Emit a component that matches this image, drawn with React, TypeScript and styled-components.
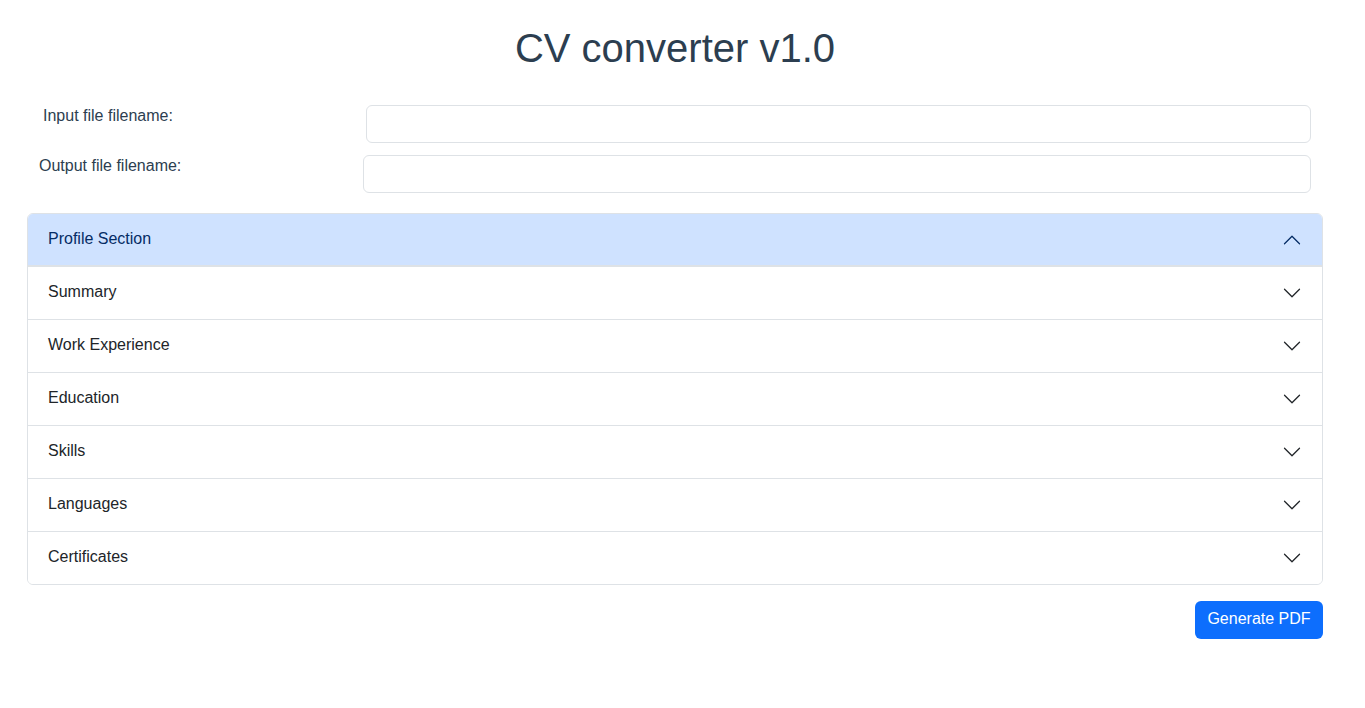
import React, { useState } from "react";
import styled, { createGlobalStyle } from "styled-components";

const Global = createGlobalStyle`
  html, body { margin: 0; padding: 0; background: #fff; }
  body { font-family: "Liberation Sans", Arial, sans-serif; color: #212529; }
  * { box-sizing: border-box; }
`;

const Page = styled.div`
  width: 1296px;
  margin-left: 27px;
  padding-top: 24px;
`;

const Title = styled.h1`
  margin: 0 0 33px;
  text-align: center;
  font-size: 40px;
  font-weight: 400;
  line-height: 48px;
  color: #2c3e50;
`;

const Form = styled.div`
  display: flex;
  flex-direction: column;
  gap: 12px;
  padding-right: 12px;
`;

const Row = styled.div`
  display: flex;
  align-items: flex-start;
`;

const Label = styled.label<{ $inset: number }>`
  width: 164px;
  flex: none;
  padding-left: ${(p) => p.$inset}px;
  font-size: 16px;
  line-height: 20px;
  margin-top: 1px;
  color: #2c3e50;
`;

const Input = styled.input<{ $offset: number }>`
  flex: 1;
  height: 38px;
  margin-left: ${(p) => p.$offset}px;
  border: 1px solid #dee2e6;
  border-radius: 6px;
  padding: 6px 12px;
  font: inherit;
  font-size: 16px;
  outline: none;
`;

const Accordion = styled.div`
  margin-top: 20px;
  border: 1px solid #dee2e6;
  border-radius: 6px;
  overflow: hidden;
`;

const Item = styled.div`
  & + & {
    border-top: 1px solid #dee2e6;
  }
`;

const Header = styled.button<{ $open: boolean }>`
  display: flex;
  align-items: center;
  justify-content: space-between;
  width: 100%;
  height: 52px;
  padding: 0 20px 2px;
  border: 0;
  background: ${(p) => (p.$open ? "#cfe2ff" : "#fff")};
  color: ${(p) => (p.$open ? "#052c65" : "#212529")};
  font-family: "Liberation Sans", Arial, sans-serif;
  font-size: 16px;
  text-align: left;
  cursor: pointer;
  box-shadow: ${(p) => (p.$open ? "inset 0 -1px 0 #dee2e6" : "none")};
`;

const Chevron = styled.svg<{ $open: boolean }>`
  width: 20px;
  height: 20px;
  flex: none;
  margin-top: 2px;
  transform: ${(p) => (p.$open ? "rotate(-180deg)" : "none")};
`;

const Footer = styled.div`
  display: flex;
  justify-content: flex-end;
  margin-top: 16px;
`;

const Button = styled.button`
  height: 38px;
  width: 128px;
  border: 0;
  border-radius: 6px;
  background: #0d6efd;
  color: #fff;
  font-family: "Liberation Sans", Arial, sans-serif;
  font-size: 16px;
  padding: 0 0 2px;
  cursor: pointer;
`;

const sections = [
  "Profile Section",
  "Summary",
  "Work Experience",
  "Education",
  "Skills",
  "Languages",
  "Certificates",
];

export default function App() {
  const [open, setOpen] = useState(0);
  return (
    <>
      <Global />
      <Page>
        <Title>CV converter v1.0</Title>
        <Form>
          <Row>
            <Label $inset={16}>Input file filename:</Label>
            <Input $offset={175} />
          </Row>
          <Row>
            <Label $inset={12}>Output file filename:</Label>
            <Input $offset={172} />
          </Row>
        </Form>
        <Accordion>
          {sections.map((s, i) => (
            <Item key={s}>
              <Header $open={open === i} onClick={() => setOpen(open === i ? -1 : i)}>
                <span>{s}</span>
                <Chevron $open={open === i} viewBox="0 0 16 16" fill="none">
                  <path
                    d="M2 5L8 11L14 5"
                    stroke={open === i ? "#052c65" : "#212529"}
                    strokeLinecap="round"
                    strokeLinejoin="round"
                  />
                </Chevron>
              </Header>
            </Item>
          ))}
        </Accordion>
        <Footer>
          <Button>Generate PDF</Button>
        </Footer>
      </Page>
    </>
  );
}
